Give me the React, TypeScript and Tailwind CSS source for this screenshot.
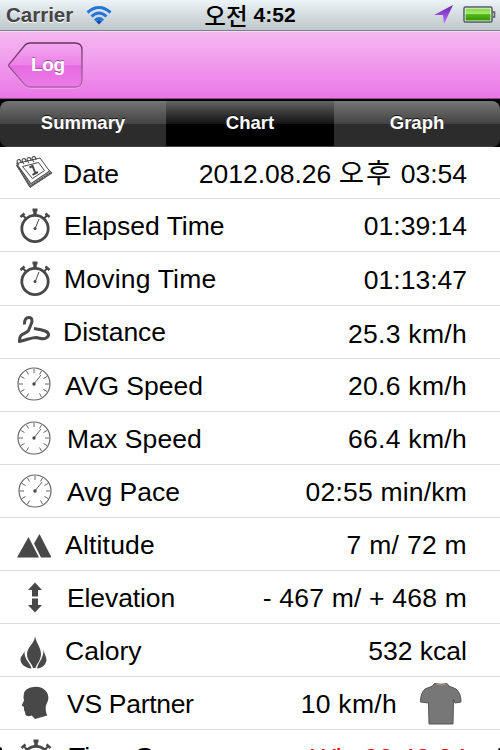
import type { ReactNode } from "react";

const ink = "#484848";

function CalendarIcon() {
  return (
    <svg width="38" height="33" viewBox="0 0 38 33" fill="none" stroke={ink}>
      <path d="M1.500 9 15 31.500 37 17 33 13 17 26Z" fill="#999" stroke="#555" strokeWidth="1" />
      <path d="M1.500 7.500 25 2 34.500 15 16 27.500Z" fill="#fff" strokeWidth="1" />
      <path d="M2 9.500 15.500 30.500M16.500 29.500l19.500-13" strokeWidth="1.400" strokeDasharray="2 1" />
      <path d="M7.500 10.500 23.500 6.500 29.500 14.500 17.500 22.500Z" strokeWidth="1" />
      <path d="M14.500 11.500 17.500 10 20.500 17.500M17.500 18.800l5.500-2.800" strokeWidth="2" />
      <path d="M4 9q-4-5 0-5.500 2 0 2 3.500M9 8q-4-5 0-5.500 2 0 2 3.500M14 7q-4-5 0-5.500 2 0 2 3.500M19 6q-4-5 0-5.500 2 0 2 3.500" strokeWidth="1.100" />
    </svg>
  );
}
function StopwatchIcon() {
  return (
    <svg width="32" height="36" viewBox="0 0 32 36" fill="none" stroke={ink}>
      <circle cx="16" cy="20.500" r="13.200" strokeWidth="2.800" />
      <path d="M13.500 2h5" strokeWidth="3" />
      <path d="M16 2v5" strokeWidth="3.500" />
      <path d="m4 7.500 3.500 3.500m20.500-3.500-3.500 3.500" strokeWidth="2" />
      <path d="m1.500 9 4-3.500m25 3.500-4-3.500" strokeWidth="2.500" />
      <path d="m16 21 4-10" strokeWidth="1" />
      <circle cx="16" cy="20.500" r="1.500" fill={ink} stroke="none" />
    </svg>
  );
}
function HangerIcon() {
  return (
    <svg width="34" height="30" viewBox="0 0 34 30" fill="none" stroke={ink} strokeWidth="3" strokeLinejoin="round">
      <path d="M7.500 9.500C7 5 9 2.500 12 2.500 15 2.500 16 6 14 9.500L11.500 15.500C10 18 6 18.500 4 20.500 2.500 22 2.500 24 2.500 26.500L8 25C12 24 16 22.500 19 22.500 23 23 26 25 29 23 33 21 32 17.500 28 16 24 14.500 20 14 17 13.500" />
    </svg>
  );
}
function GaugeIcon() {
  return (
    <svg width="34" height="34" viewBox="0 0 34 34" fill="none" stroke="#666">
      <circle cx="17" cy="17" r="16" strokeWidth="1.200" />
      <path d="M17 2v4M2 17h4M28 17h4M9.500 4l2 3.500M24.500 4l-2 3.500M4 9.500l3.500 2M30 9.500l-3.500 2M4 24.500l3.500-2M30 24.500l-3.500-2M9.500 30l2-3.500M24.500 30l-2-3.500" strokeWidth="1" />
      <path d="m17 17 7-9" strokeWidth="1" />
      <circle cx="17" cy="17" r="1.700" fill={ink} stroke="none" />
    </svg>
  );
}
function MountainIcon() {
  return (
    <svg width="34" height="24" viewBox="0 0 34 24" fill={ink}>
      <path d="M0 23.500 11.500 3 22 23.500ZM17 9.500 22.500 0 34.500 23.500H24Z" />
    </svg>
  );
}
function ElevationIcon() {
  return (
    <svg width="16" height="31" viewBox="0 0 16 31" fill={ink}>
      <path d="M8 .5 15 8H11V14.500H5V8H1ZM5 16.500H11V23H15L8 30.500 1 23H5Z" />
    </svg>
  );
}
function FlameIcon() {
  return (
    <svg width="28" height="34" viewBox="0 0 28 34" fill={ink}>
      <path d="M15 0C16 7 21.500 12 21 19 20.500 25 17 27 15.500 32H13C12 27 7 25 7 18 7 11 15 7 15 0Z" />
      <path d="M4.500 15C4 24 10 26 11.500 32.500 5 32 .500 28 .500 23.500 .500 20 3.500 19 4.500 15ZM23.500 13C23.500 17 26.500 20 26.500 24 26 29 22 32 17 32.500 18 26 24 23 23.500 13Z" />
    </svg>
  );
}
function HeadIcon() {
  return (
    <svg width="28" height="34" viewBox="0 0 28 34" fill={ink}>
      <path d="M3 7C4 3 9 1 15 .700 23 1 28 6 27.300 13 27 16 25 18 24.700 21 24.700 25 25 27 26.300 29.500Q20 31 14 33L10.700 29.500Q6 31 4.500 29L4 26 3 24 3 21 .700 19.500 3 14.500Q2 11 3 7Z" />
    </svg>
  );
}
function ShirtIcon() {
  return (
    <svg width="42" height="43" viewBox="0 0 42 43">
      <path d="M14.500 1.500Q21 3 27 1.500L29 4 36 7Q41 11 41 20L35 21 33.500 17 33 42H9L8.500 21 .500 20Q.500 11 5 7L12.500 4Z" fill="#777" stroke="#555" />
      <path d="M15.500 2q6 2 11 0" fill="none" stroke="#a9977c" />
    </svg>
  );
}

type Row = {
  label: string;
  value: ReactNode;
  icon: ReactNode;
  height: string;
  iconPos: string;
  labelPos: string;
  valuePos: string;
};

const rows: Row[] = [
  { label: "Date", value: <>2012.08.26 <span className="font-['Noto_Sans_CJK_KR'] text-[27.5px] leading-none tracking-[2px]">오후</span> 03:54</>, icon: <CalendarIcon />, height: "h-[52px]", iconPos: "pl-[15px] pt-[9px]", labelPos: "pl-[63px] pt-[12px]", valuePos: "pt-[11px]" },
  { label: "Elapsed Time", value: "01:39:14", icon: <StopwatchIcon />, height: "h-[53px]", iconPos: "pl-[19px] pt-[9px]", labelPos: "pl-[64px] pt-[12px]", valuePos: "pt-[12px]" },
  { label: "Moving Time", value: "01:13:47", icon: <StopwatchIcon />, height: "h-[54px]", iconPos: "pl-[19px] pt-[9px]", labelPos: "pl-[64px] pt-[12px] tracking-[0.2px]", valuePos: "pt-[13px]" },
  { label: "Distance", value: "25.3 km/h", icon: <HangerIcon />, height: "h-[53px]", iconPos: "pl-[17px] pt-[9px]", labelPos: "pl-[63px] pt-[11px]", valuePos: "pt-[13px] tracking-[0.3px]" },
  { label: "AVG Speed", value: "20.6 km/h", icon: <GaugeIcon />, height: "h-[53px]", iconPos: "pl-[17px] pt-[8px]", labelPos: "pl-[65px] pt-[12px]", valuePos: "pt-[12px] tracking-[0.3px]" },
  { label: "Max Speed", value: "66.4 km/h", icon: <GaugeIcon />, height: "h-[53px]", iconPos: "pl-[17px] pt-[9px]", labelPos: "pl-[67px] pt-[12px] tracking-[0.1px]", valuePos: "pt-[12px] tracking-[0.3px]" },
  { label: "Avg Pace", value: "02:55 min/km", icon: <GaugeIcon />, height: "h-[53px]", iconPos: "pl-[18px] pt-[9px]", labelPos: "pl-[67px] pt-[12px]", valuePos: "pt-[12px] tracking-[0.2px]" },
  { label: "Altitude", value: "7 m/ 72 m", icon: <MountainIcon />, height: "h-[53px]", iconPos: "pl-[17px] pt-[16px]", labelPos: "pl-[65px] pt-[12px] tracking-[0.2px]", valuePos: "pt-[12px] tracking-[0.3px]" },
  { label: "Elevation", value: "- 467 m/ + 468 m", icon: <ElevationIcon />, height: "h-[53px]", iconPos: "pl-[27px] pt-[11px]", labelPos: "pl-[67px] pt-[12px] tracking-[-0.1px]", valuePos: "pt-[12px] tracking-[0.2px]" },
  { label: "Calory", value: "532 kcal", icon: <FlameIcon />, height: "h-[53px]", iconPos: "pl-[20px] pt-[12px]", labelPos: "pl-[65px] pt-[12px]", valuePos: "pt-[12px]" },
  { label: "VS Partner", value: "10 km/h", icon: <HeadIcon />, height: "h-[53px]", iconPos: "pl-[21px] pt-[9px]", labelPos: "pl-[67px] pt-[12px] tracking-[-0.3px]", valuePos: "pt-[12px] tracking-[0.3px]" },
  { label: "Time Gap", value: <span className="text-[#f00000]">Win 00:40:24</span>, icon: <StopwatchIcon />, height: "h-[53px]", iconPos: "pl-[20px] pt-[9px]", labelPos: "pl-[69px] pt-[12px]", valuePos: "pt-[13px]" },
];

export default function App() {
  return (
    <main className="relative h-[750px] w-[500px] overflow-hidden bg-white font-['Liberation_Sans','Noto_Sans_CJK_KR',sans-serif] text-black">
      <header className="grid h-[31px] grid-cols-[1fr_auto_1fr] items-center border-b border-[#78838a] bg-linear-to-b from-[#edf4f7] to-[#bdc6c9]">
        <div className="flex items-center pl-[6px] text-[20.5px] leading-[30px] font-bold text-[#454545] [text-shadow:0_1px_0_#fff]">
          <span className="w-[80px]">Carrier</span>
          <svg width="26" height="21" viewBox="0 0 26 21" fill="none" stroke="#2474da" strokeWidth="3">
            <path d="M1.500 7.500Q13-2.500 24.500 7.500M5.500 11.500Q13 4.500 20.500 11.500M9 15.500Q13 11.500 17 15.500" />
            <path d="m10 16.500 3 3 3-3q-3-3-6 0" fill="#124bb6" stroke="none" />
          </svg>
        </div>
        <div className="flex items-center gap-[6px] text-[21px] leading-[30px] font-bold"><span className="font-['Noto_Sans_CJK_KR'] text-[23.5px] font-medium">오전</span><span>4:52</span></div>
        <div className="flex items-center justify-end gap-[9px] pr-[4px]">
          <svg width="20" height="20" viewBox="0 0 20 20"><defs><linearGradient id="loc" x2="0" y2="1"><stop stopColor="#6421af" /><stop offset="1" stopColor="#c573ff" /></linearGradient></defs><path d="M0 10 19 0 10 19 9 10Z" fill="url(#loc)" /></svg>
          <svg width="33" height="18" viewBox="0 0 33 18"><defs><linearGradient id="bat" x2="0" y2="1"><stop stopColor="#86d84d" /><stop offset=".45" stopColor="#a5ed6c" /><stop offset=".5" stopColor="#58b81d" /><stop offset="1" stopColor="#329600" /></linearGradient></defs><rect x="1" y="1" width="28" height="15" rx="1.500" fill="#fff" stroke="#535b60" strokeWidth="1.500" /><rect x="2.500" y="2.500" width="25" height="12" fill="url(#bat)" /><path d="M29.500 6h2v5h-2" fill="none" stroke="#535b60" strokeWidth="1.500" /></svg>
        </div>
      </header>

      <nav className="flex h-[68px] items-start border-t border-b border-t-[#fbd4fa] border-b-[#8e4b8a] bg-linear-to-b from-[#f4b8f1] to-[#ea76e6] pt-[9px] pl-[8px]">
        <button className="grid">
          <svg className="col-start-1 row-start-1" width="78" height="48" viewBox="0 0 78 48"><defs><linearGradient id="back" x2="0" y2="1"><stop stopColor="#f3a9ef" /><stop offset=".49" stopColor="#ec82e7" /><stop offset=".52" stopColor="#e76be1" /><stop offset="1" stopColor="#eb7be7" /></linearGradient><linearGradient id="edge" x2="0" y2="1"><stop stopColor="#67345f" /><stop offset="1" stopColor="#b261ad" /></linearGradient></defs><path d="M17 3Q19 1 22 1H67Q74 1 74 8V38Q74 45 67 45H22Q19 45 17 43L1 24.500Q0 23.500 1 22.500Z" transform="translate(0 2)" fill="none" stroke="#f9b8f6" /><path d="M17 3Q19 1 22 1H67Q74 1 74 8V38Q74 45 67 45H22Q19 45 17 43L1 24.500Q0 23.500 1 22.500Z" transform="translate(0 1)" fill="url(#back)" stroke="url(#edge)" strokeWidth="1.300" /></svg>
          <span className="col-start-1 row-start-1 self-center pb-[1px] pl-[23px] text-left text-[19px] leading-[24px] font-bold tracking-[-0.4px] text-white [text-shadow:0_-1px_0_#9d5598]">Log</span>
        </button>
      </nav>

      <div className="h-[48px] bg-black pt-[2px]">
        <div className="grid h-[46px] grid-cols-[166px_168px_166px] overflow-hidden rounded-[8px] border-b border-[#444] text-center text-[18.5px] leading-[43px] font-bold text-white [text-shadow:0_-1px_0_#111]">
          <div className="bg-linear-to-b from-[#747474] via-[#444] via-50% to-[#2c2c2c] to-51%">Summary</div>
          <div className="bg-linear-to-b from-[#656565] via-[#151515] via-50% to-black to-51%">Chart</div>
          <div className="bg-linear-to-b from-[#777] via-[#444] via-50% to-[#2c2c2c] to-51%">Graph</div>
        </div>
      </div>

      <ul className="text-[26.5px] leading-[30px]">
        {rows.map((row) => (
          <li key={row.label} className={`grid ${row.height} grid-cols-1 grid-rows-1 border-b border-[#dcdcdc]`}>
            <div className={`col-start-1 row-start-1 ${row.iconPos}`}>{row.icon}</div>
            <span className={`col-start-1 row-start-1 ${row.labelPos}`}>{row.label}</span>
            <div className={`col-start-1 row-start-1 flex items-start justify-end ${row.label === "VS Partner" ? "gap-[23px] pr-[38px]" : "pr-[33px]"} ${row.valuePos}`}>
              <span>{row.value}</span>
              {row.label === "VS Partner" && <div className="-mt-[7px]"><ShirtIcon /></div>}
            </div>
          </li>
        ))}
      </ul>
      <div className="absolute -bottom-[3px] -left-[3px] h-[6px] w-[5px] rounded-full bg-black" />
      <div className="absolute -right-[3px] -bottom-[3px] h-[5px] w-[5px] rounded-full bg-black" />
    </main>
  );
}
